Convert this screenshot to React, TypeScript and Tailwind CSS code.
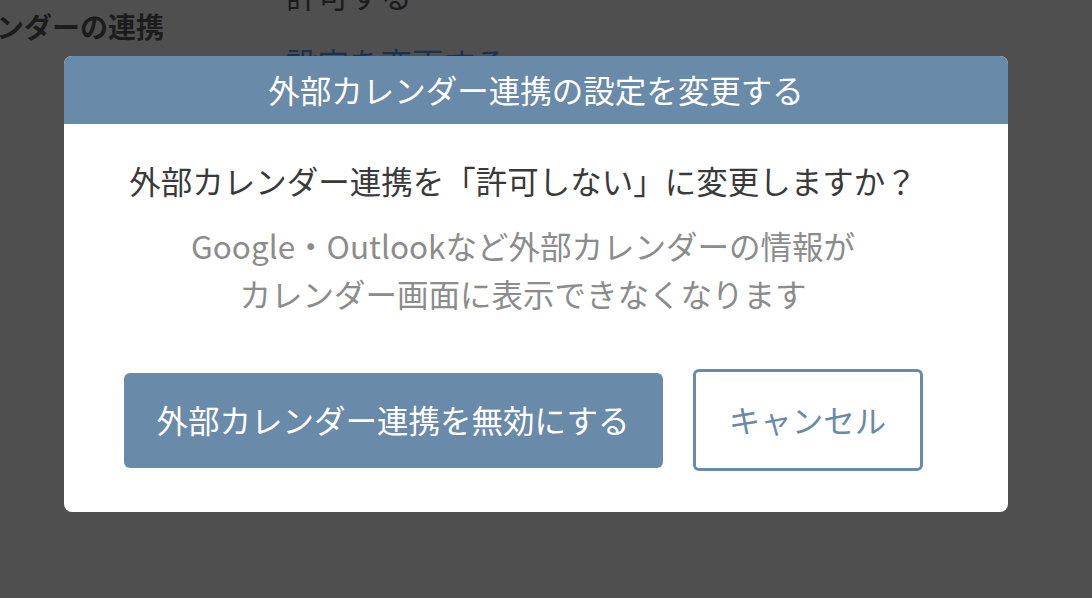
import React from "react";

export default function App() {
  const font = { fontFamily: '"Noto Sans CJK JP", "Noto Sans", sans-serif' };
  return (
    <div
      className="relative w-full h-[598px] overflow-hidden bg-[#4f4f4f]"
      style={font}
    >
      {/* dimmed page underneath */}
      <div className="flex">
        <div className="w-[290px] shrink-0 pt-[6px] ml-[-4px]">
          <div className="text-[28px] leading-[40px] font-bold text-[#1c1c1c] whitespace-nowrap">
            ンダーの連携
          </div>
        </div>
        <div className="flex flex-col mt-[-28px]">
          <div className="text-[31.5px] leading-[44px] text-[#1c1c1c] whitespace-nowrap">
            許可する
          </div>
          <div className="mt-[24px] text-[31.5px] leading-[44px] text-[#1c3050] whitespace-nowrap">
            設定を変更する
          </div>
        </div>
      </div>

      {/* modal */}
      <div className="absolute left-[64px] top-[56px] w-[944px] h-[456px] rounded-[8px] bg-white overflow-hidden flex flex-col">
        <div className="h-[68px] shrink-0 bg-[#6a8aaa] flex items-center justify-center text-white text-[31.5px] leading-none">
          外部カレンダー連携の設定を変更する
        </div>
        <div className="flex flex-col items-center pl-[40px] pr-[66px] pt-[32px]">
          <div className="text-[31.5px] leading-[48px] text-[#3a3a3a] whitespace-nowrap">
            外部カレンダー連携を「許可しない」に変更しますか？
          </div>
          <div className="mt-[17px] text-[31.5px] leading-[48px] text-[#8c8c8c] text-center whitespace-nowrap">
            <div>Google・Outlookなど外部カレンダーの情報が</div>
            <div>カレンダー画面に表示できなくなります</div>
          </div>
          <div className="mt-[52px] flex items-center gap-[30px]">
            <button className="w-[539px] h-[95px] rounded-[6px] bg-[#6a8aaa] text-white text-[31.5px] leading-none flex items-center justify-center">
              外部カレンダー連携を無効にする
            </button>
            <button className="w-[230px] h-[102px] rounded-[6px] border-[3px] border-[#6a8aaa] bg-white text-[#6a8aaa] text-[31.5px] leading-none flex items-center justify-center">
              キャンセル
            </button>
          </div>
        </div>
      </div>
    </div>
  );
}
